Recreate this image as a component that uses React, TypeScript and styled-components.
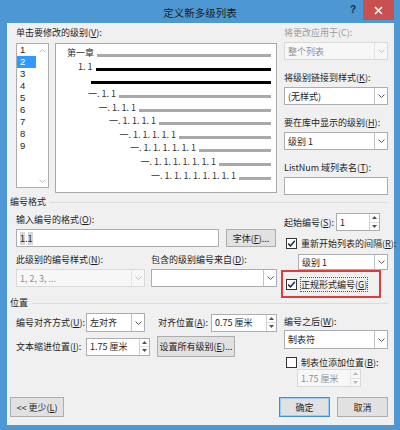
import React from "react";
import styled, { createGlobalStyle } from "styled-components";

const GlobalStyle = createGlobalStyle`
  html, body {
    margin: 0;
    padding: 0;
    background: #ffffff;
  }
  body {
    font-family: "Noto Sans CJK SC", "Noto Sans", sans-serif;
    font-size: 9px;
    color: #1e1e1e;
  }
  * {
    box-sizing: border-box;
  }
`;

const Window = styled.div`
  width: 400px;
  height: 430px;
  background: #4d97d2;
  display: flex;
  flex-direction: column;
`;

const TitleBar = styled.div`
  height: 23px;
  display: grid;
  grid-template-columns: 1fr auto 1fr;
  align-items: center;
`;

const Title = styled.div`
  grid-column: 2;
  font-size: 10.5px;
  color: #1a1a1a;
  padding-top: 1px;
`;

const TitleButtons = styled.div`
  grid-column: 3;
  align-self: start;
  display: flex;
  justify-content: flex-end;
  padding-right: 6px;
`;

const HelpButton = styled.div`
  width: 18px;
  height: 18px;
  display: flex;
  align-items: center;
  justify-content: center;
  font-family: "Liberation Sans", sans-serif;
  font-weight: bold;
  font-size: 10px;
  color: #1c2c44;
  margin-right: 1px;
`;

const CloseButton = styled.div`
  width: 31px;
  height: 20px;
  background: #c75050;
  display: flex;
  align-items: center;
  justify-content: center;
`;

const Client = styled.div`
  flex: 1;
  margin: 0 6px 5px 7px;
  background: #f0f0f0;
  padding: 4px 6px 0 9px;
  display: flex;
  flex-direction: column;
`;

const Section = styled.div`
  display: grid;
  grid-template-columns: 261px 104px;
  column-gap: 7px;
  align-items: start;
`;

const Column = styled.div<{ $top?: number }>`
  display: flex;
  flex-direction: column;
  padding-top: ${(p) => p.$top ?? 0}px;
`;

const Label = styled.div<{ $disabled?: boolean; $gap?: number }>`
  line-height: 12px;
  height: 12px;
  white-space: nowrap;
  color: ${(p) => (p.$disabled ? "#9b9b9b" : "#1e1e1e")};
  margin-bottom: ${(p) => p.$gap ?? 3}px;
`;

const Key = styled.span`
  text-decoration: underline;
  text-underline-offset: 1px;
`;

const GroupHeader = styled.div<{ $top?: number }>`
  display: flex;
  align-items: center;
  gap: 4px;
  height: 12px;
  line-height: 12px;
  margin-left: -6px;
  margin-top: ${(p) => p.$top ?? 0}px;
  &::after {
    content: "";
    flex: 1;
    height: 1px;
    background: #dcdcdc;
  }
`;

/* ---------- level list + preview ---------- */

const ListRow = styled.div`
  display: flex;
  gap: 6px;
`;

const LevelList = styled.div`
  width: 33px;
  height: 145px;
  background: #ffffff;
  border: 1px solid #abadb3;
  display: flex;
`;

const LevelItems = styled.div`
  flex: 1;
  display: flex;
  flex-direction: column;
`;

const LevelItem = styled.div<{ $selected?: boolean }>`
  height: 12px;
  line-height: 12px;
  padding-left: 3px;
  font-family: "Liberation Sans", sans-serif;
  font-size: 9.5px;
  background: ${(p) => (p.$selected ? "#3399ff" : "transparent")};
  color: ${(p) => (p.$selected ? "#ffffff" : "#1e1e1e")};
`;

const ScrollTrack = styled.div`
  width: 12px;
  display: flex;
  flex-direction: column;
  justify-content: space-between;
  align-items: center;
  padding: 5px 0 4px;
`;

const Preview = styled.div`
  width: 222px;
  height: 150px;
  background: #ffffff;
  border: 1px solid #a8a8a8;
  padding-top: 5px;
`;

const PreviewRow = styled.div<{ $indent: number }>`
  height: 13.6px;
  display: flex;
  align-items: center;
  padding-left: ${(p) => p.$indent}px;
  padding-right: 5px;
`;

const PreviewText = styled.span`
  font-size: 9px;
  line-height: 10px;
  color: #333333;
  white-space: nowrap;
  margin-right: 3px;
  margin-bottom: 5px;
`;

const PreviewLine = styled.div<{ $active?: boolean }>`
  flex: 1;
  height: 3px;
  background: ${(p) => (p.$active ? "#000000" : "#a9a9a9")};
`;

/* ---------- controls ---------- */

const FieldBox = styled.div<{ $w?: number; $h?: number; $disabled?: boolean }>`
  width: ${(p) => (p.$w ? `${p.$w}px` : "100%")};
  height: ${(p) => p.$h ?? 18}px;
  background: ${(p) => (p.$disabled ? "#f7f7f7" : "#ffffff")};
  border: 1px solid ${(p) => (p.$disabled ? "#d9d9d9" : "#abadb3")};
  display: flex;
  align-items: stretch;
  flex-shrink: 0;
`;

const FieldText = styled.div<{ $disabled?: boolean }>`
  flex: 1;
  display: flex;
  align-items: center;
  padding-left: 3px;
  white-space: nowrap;
  overflow: hidden;
  color: ${(p) => (p.$disabled ? "#8f8f8f" : "#1e1e1e")};
`;

const ArrowBox = styled.div<{ $disabled?: boolean }>`
  width: 13px;
  border-left: 1px solid ${(p) => (p.$disabled ? "#e3e3e3" : "#c4c4c4")};
  display: flex;
  align-items: center;
  justify-content: center;
`;

const SpinButtons = styled.div<{ $disabled?: boolean }>`
  width: 10px;
  display: flex;
  flex-direction: column;
  border-left: 1px solid ${(p) => (p.$disabled ? "#e3e3e3" : "#d0d0d0")};
`;

const SpinHalf = styled.div<{ $bottom?: boolean }>`
  flex: 1;
  display: flex;
  align-items: center;
  justify-content: center;
  border-top: ${(p) => (p.$bottom ? "1px solid #e0e0e0" : "none")};
`;

const FieldNumber = styled.span`
  background: #d6d6d6;
`;

const PushButton = styled.div<{ $w: number; $h?: number; $default?: boolean }>`
  width: ${(p) => p.$w}px;
  height: ${(p) => p.$h ?? 18}px;
  background: #e1e1e1;
  border: 1px solid ${(p) => (p.$default ? "#3c8fdb" : "#adadad")};
  box-shadow: ${(p) => (p.$default ? "inset 0 0 0 1px #9ccbf3" : "none")};
  display: flex;
  align-items: center;
  justify-content: center;
  white-space: nowrap;
  flex-shrink: 0;
`;

const CheckRow = styled.div<{ $indent?: number }>`
  display: flex;
  align-items: center;
  gap: 4px;
  height: 12px;
  padding-left: ${(p) => p.$indent ?? 2}px;
  white-space: nowrap;
`;

const CheckSquare = styled.div`
  width: 11px;
  height: 11px;
  border: 1px solid #333333;
  background: #ffffff;
  display: flex;
  align-items: center;
  justify-content: center;
`;

const Highlight = styled.div`
  width: 100px;
  height: 28px;
  margin-left: -3px;
  border: 2px solid #e03a3a;
  display: flex;
  align-items: center;
  padding-left: 3px;
`;

const FocusText = styled.span`
  outline: 1px dotted #555555;
  outline-offset: 0;
`;

const Row = styled.div<{ $top?: number }>`
  display: flex;
  align-items: center;
  gap: 0;
  margin-top: ${(p) => p.$top ?? 0}px;
`;

const InlineLabel = styled.div<{ $w: number; $left?: number }>`
  width: ${(p) => p.$w}px;
  margin-left: ${(p) => p.$left ?? 0}px;
  white-space: nowrap;
  flex-shrink: 0;
`;

const Indented = styled.div<{ $left: number; $top?: number }>`
  margin-left: ${(p) => p.$left}px;
  margin-top: ${(p) => p.$top ?? 0}px;
`;

const Pair = styled.div`
  display: grid;
  grid-template-columns: 129px 126px;
  column-gap: 6px;
  margin-top: 7px;
`;

const Footer = styled.div`
  display: flex;
  align-items: center;
  margin-top: 10px;
  margin-left: -6px;
`;

const Spacer = styled.div`
  flex: 1;
`;

const ButtonGap = styled.div`
  width: 7px;
`;

/* ---------- small drawings ---------- */

const Chevron = ({ color = "#555" }: { color?: string }) => (
  <svg width="7" height="4" viewBox="0 0 7 4">
    <path d="M0.5 0.5 L3.5 3.5 L6.5 0.5" fill="none" stroke={color} strokeWidth="1" />
  </svg>
);

const ChevronUp = ({ color = "#c2c2c2" }: { color?: string }) => (
  <svg width="7" height="4" viewBox="0 0 7 4">
    <path d="M0.5 3.5 L3.5 0.5 L6.5 3.5" fill="none" stroke={color} strokeWidth="1" />
  </svg>
);

const Triangle = ({ up, color }: { up?: boolean; color: string }) => (
  <svg width="5" height="3" viewBox="0 0 5 3">
    <path d={up ? "M0 3 L2.5 0 L5 3 Z" : "M0 0 L2.5 3 L5 0 Z"} fill={color} />
  </svg>
);

const Combo = ({
  value,
  width,
  height,
  disabled,
}: {
  value?: string;
  width?: number;
  height?: number;
  disabled?: boolean;
}) => (
  <FieldBox $w={width} $h={height} $disabled={disabled}>
    <FieldText $disabled={disabled}>{value}</FieldText>
    <ArrowBox $disabled={disabled}>
      <Chevron color={disabled ? "#c0c0c0" : "#555"} />
    </ArrowBox>
  </FieldBox>
);

const Spinner = ({
  value,
  width,
  height,
  disabled,
}: {
  value: string;
  width: number;
  height?: number;
  disabled?: boolean;
}) => {
  const c = disabled ? "#b8b8b8" : "#505050";
  return (
    <FieldBox $w={width} $h={height} $disabled={disabled}>
      <FieldText $disabled={disabled}>{value}</FieldText>
      <SpinButtons $disabled={disabled}>
        <SpinHalf>
          <Triangle up color={c} />
        </SpinHalf>
        <SpinHalf $bottom>
          <Triangle color={c} />
        </SpinHalf>
      </SpinButtons>
    </FieldBox>
  );
};

const Check = ({ checked }: { checked?: boolean }) => (
  <CheckSquare>
    {checked && (
      <svg width="9" height="9" viewBox="0 0 9 9">
        <path d="M1.2 4.6 L3.5 6.9 L7.8 1.8" fill="none" stroke="#1b2b3c" strokeWidth="1.5" />
      </svg>
    )}
  </CheckSquare>
);

const previewRows = [
  { text: "第一章", indent: 11, active: false },
  { text: "1. 1", indent: 22, active: true },
  { text: "", indent: 35, active: true },
  ...[3, 4, 5, 6, 7, 8, 9].map((lvl) => ({
    text: "一. " + Array(lvl - 1).fill("1").join(". "),
    indent: 11 + (lvl - 1) * 10.5,
    active: false,
  })),
];

export default function App() {
  return (
    <>
      <GlobalStyle />
      <Window>
        <TitleBar>
          <Title>定义新多级列表</Title>
          <TitleButtons>
            <HelpButton>?</HelpButton>
            <CloseButton>
              <svg width="9" height="9" viewBox="0 0 9 9">
                <path d="M1 1 L8 8 M8 1 L1 8" stroke="#ffffff" strokeWidth="1.6" />
              </svg>
            </CloseButton>
          </TitleButtons>
        </TitleBar>

        <Client>
          <Section>
            <Column>
              <Label $gap={4}>
                单击要修改的级别(<Key>V</Key>):
              </Label>
              <ListRow>
                <LevelList>
                  <LevelItems>
                    {[1, 2, 3, 4, 5, 6, 7, 8, 9].map((n) => (
                      <LevelItem key={n} $selected={n === 2}>
                        {n}
                      </LevelItem>
                    ))}
                  </LevelItems>
                  <ScrollTrack>
                    <ChevronUp />
                    <Chevron color="#c2c2c2" />
                  </ScrollTrack>
                </LevelList>
                <Preview>
                  {previewRows.map((r, i) => (
                    <PreviewRow key={i} $indent={r.indent}>
                      {r.text && <PreviewText>{r.text}</PreviewText>}
                      <PreviewLine $active={r.active} />
                    </PreviewRow>
                  ))}
                </Preview>
              </ListRow>
            </Column>

            <Column>
              <Label $disabled>将更改应用于(C):</Label>
              <Combo value="整个列表" disabled />
              <Indented $left={0} $top={12}>
                <Label>
                  将级别链接到样式(<Key>K</Key>):
                </Label>
                <Combo value="(无样式)" />
              </Indented>
              <Indented $left={0} $top={12}>
                <Label>
                  要在库中显示的级别(<Key>H</Key>):
                </Label>
                <Combo value="级别 1" />
              </Indented>
              <Indented $left={0} $top={12}>
                <Label>
                  ListNum 域列表名(<Key>T</Key>):
                </Label>
                <FieldBox />
              </Indented>
            </Column>
          </Section>

          <GroupHeader $top={1}>编号格式</GroupHeader>

          <Section>
            <Column $top={6}>
              <Label>
                输入编号的格式(<Key>O</Key>):
              </Label>
              <Row>
                <FieldBox $w={203}>
                  <FieldText>
                    <FieldNumber>1</FieldNumber>.<FieldNumber>1</FieldNumber>
                  </FieldText>
                </FieldBox>
                <ButtonGap />
                <PushButton $w={50}>
                  字体(<Key>F</Key>)...
                </PushButton>
              </Row>
              <Pair>
                <div>
                  <Label>
                    此级别的编号样式(<Key>N</Key>):
                  </Label>
                  <Combo value="1, 2, 3, ..." disabled />
                </div>
                <div>
                  <Label>
                    包含的级别编号来自(<Key>D</Key>):
                  </Label>
                  <Combo />
                </div>
              </Pair>
            </Column>

            <Column $top={5}>
              <Row>
                <InlineLabel $w={52}>
                  起始编号(<Key>S</Key>):
                </InlineLabel>
                <Spinner value="1" width={44} />
              </Row>
              <Indented $left={0} $top={6}>
                <CheckRow>
                  <Check checked />
                  <span>
                    重新开始列表的间隔(<Key>R</Key>):
                  </span>
                </CheckRow>
              </Indented>
              <Indented $left={14} $top={5}>
                <Combo value="级别 1" width={90} height={16} />
              </Indented>
              <Highlight>
                <CheckRow $indent={0}>
                  <Check checked />
                  <FocusText>
                    正规形式编号(<Key>G</Key>)
                  </FocusText>
                </CheckRow>
              </Highlight>
            </Column>
          </Section>

          <GroupHeader $top={-1}>位置</GroupHeader>

          <Section>
            <Column $top={4}>
              <Row>
                <InlineLabel $w={70}>
                  编号对齐方式(<Key>U</Key>):
                </InlineLabel>
                <Combo value="左对齐" width={59} height={19} />
                <InlineLabel $w={53} $left={13}>
                  对齐位置(<Key>A</Key>):
                </InlineLabel>
                <Spinner value="0.75 厘米" width={66} />
              </Row>
              <Row $top={4}>
                <InlineLabel $w={70}>
                  文本缩进位置(<Key>I</Key>):
                </InlineLabel>
                <Spinner value="1.75 厘米" width={64} />
                <ButtonGap />
                <PushButton $w={78} $h={21}>
                  设置所有级别(<Key>E</Key>)...
                </PushButton>
              </Row>
            </Column>

            <Column $top={7}>
              <Label $gap={2}>
                编号之后(<Key>W</Key>):
              </Label>
              <Combo value="制表符" height={19} />
              <Indented $left={0} $top={7}>
                <CheckRow>
                  <Check />
                  <span>
                    制表位添加位置(<Key>B</Key>):
                  </span>
                </CheckRow>
              </Indented>
              <Indented $left={13} $top={1}>
                <Spinner value="1.75 厘米" width={64} disabled />
              </Indented>
            </Column>
          </Section>

          <Footer>
            <PushButton $w={54} $h={20}>
              &lt;&lt; 更少(<Key>L</Key>)
            </PushButton>
            <Spacer />
            <PushButton $w={51} $h={20} $default>
              确定
            </PushButton>
            <ButtonGap />
            <PushButton $w={51} $h={20}>
              取消
            </PushButton>
          </Footer>
        </Client>
      </Window>
    </>
  );
}
